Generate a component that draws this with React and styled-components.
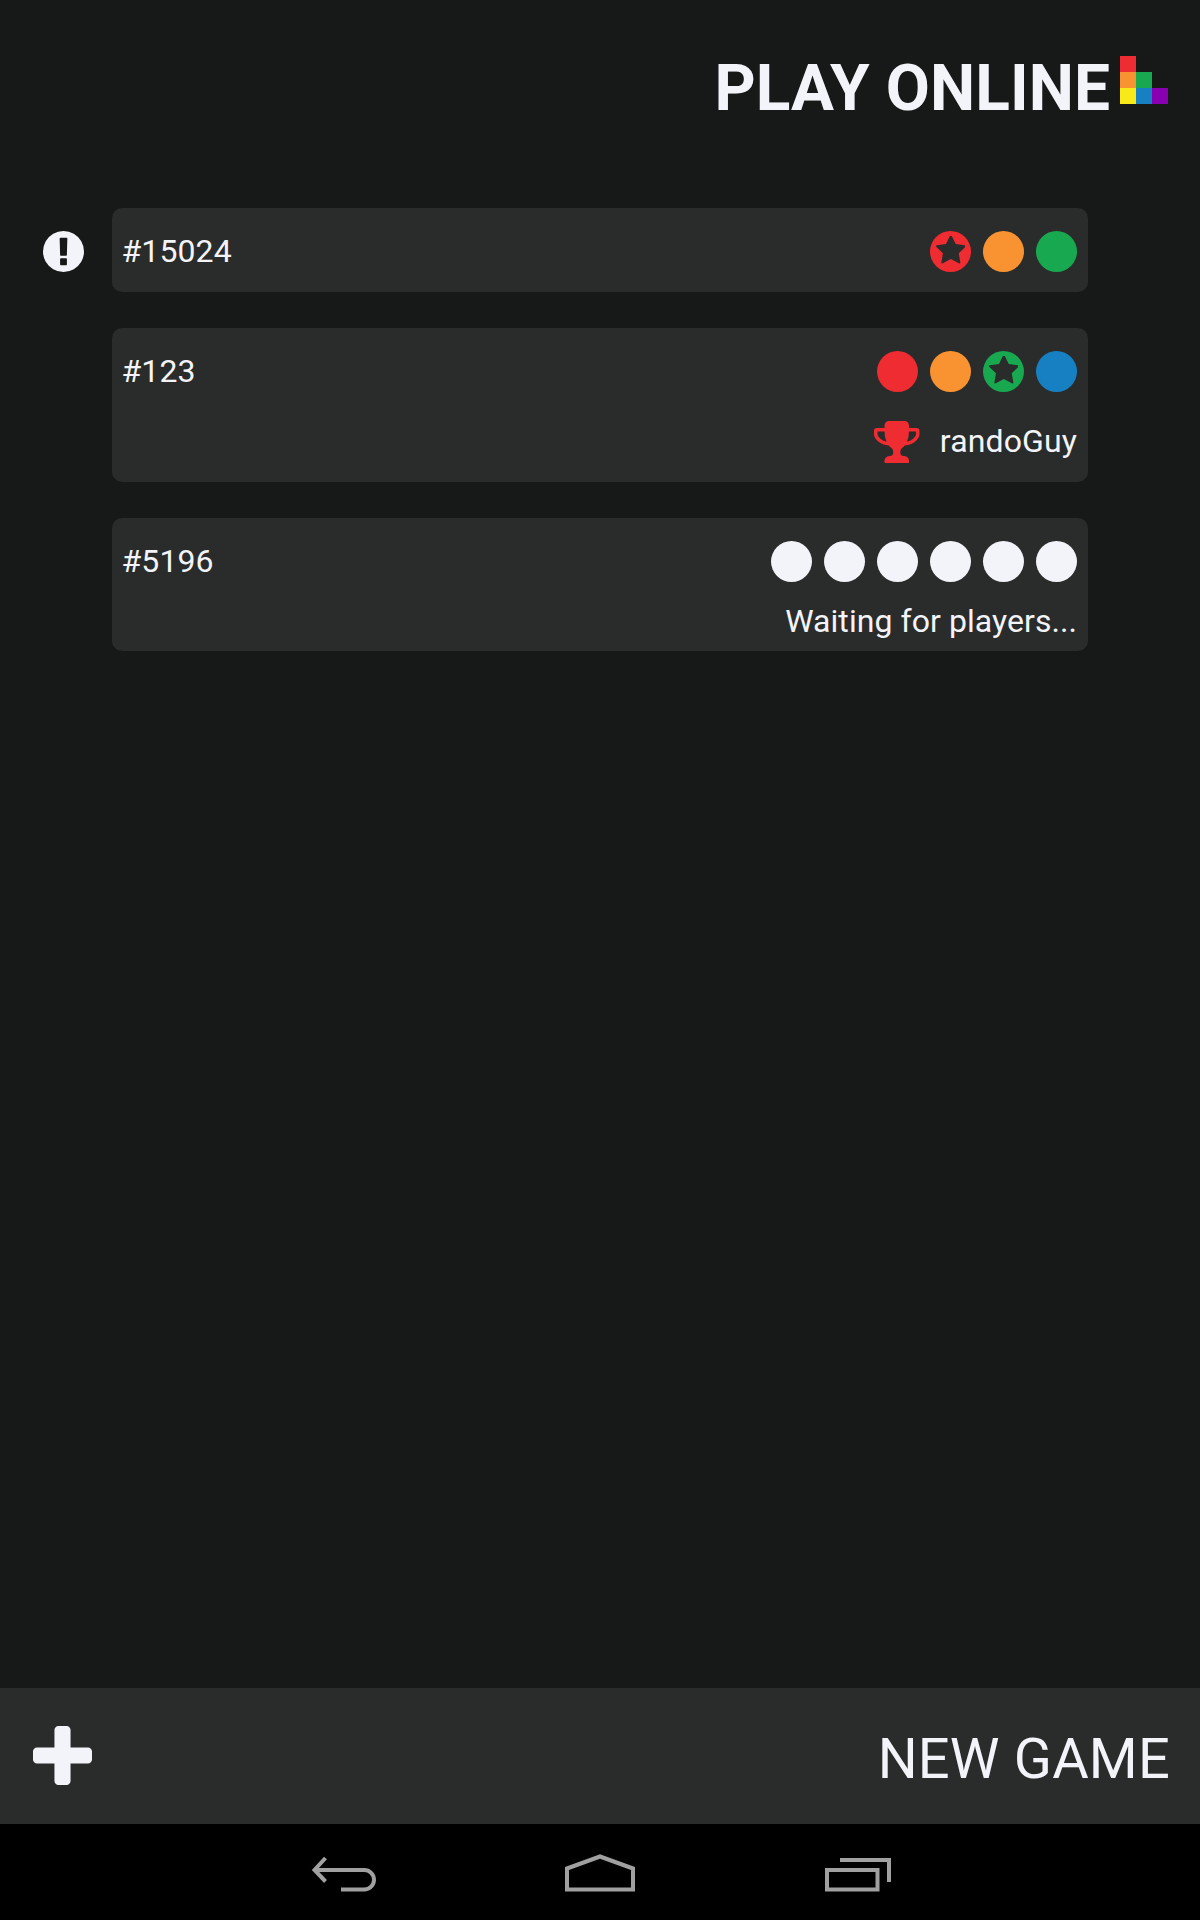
import React from "react";
import styled, { createGlobalStyle } from "styled-components";

const color = {
  bg: "#171918",
  panel: "#2a2b2b",
  text: "#f3f4f9",
  red: "#ee2c31",
  orange: "#f99331",
  yellow: "#f9e918",
  green: "#18a850",
  blue: "#1780c2",
  purple: "#8800b1",
  nav: "#a0a0a0",
};

const GlobalStyle = createGlobalStyle`
  * { box-sizing: border-box; }
  body {
    margin: 0;
    background: ${color.bg};
    color: ${color.text};
    font-family: Roboto, "Liberation Sans", sans-serif;
  }
`;

const Screen = styled.div`
  width: 1200px;
  height: 1920px;
  display: flex;
  flex-direction: column;
  background: ${color.bg};
  overflow: hidden;
`;

const Header = styled.header`
  height: 208px;
  padding: 48px 32px 0 0;
  display: flex;
  justify-content: flex-end;
  align-items: flex-start;
`;

const Title = styled.h1`
  margin: 3px 10px 0 0;
  font-size: 64px;
  line-height: 75px;
  font-weight: 700;
  letter-spacing: 0.08px;
  white-space: nowrap;
`;

const Logo = styled.div`
  margin-top: 8px;
  display: grid;
  grid-template-columns: repeat(3, 16px);
  grid-auto-rows: 16px;
`;

const Block = styled.span`
  background: ${(p) => p.$fill};
`;

const GameList = styled.main`
  flex: 1;
  display: flex;
  flex-direction: column;
  gap: 36px;
`;

const GameRow = styled.div`
  display: grid;
  grid-template-columns: 112px 976px;
`;

const Alert = styled.div`
  padding: 23px 0 0 43px;
`;

const Card = styled.section`
  grid-column: 2;
  height: ${(p) => p.$height}px;
  padding: 23px 11px 0 9.5px;
  border-radius: 10px;
  background: ${color.panel};
`;

const CardTop = styled.div`
  height: 41px;
  display: flex;
  justify-content: space-between;
  align-items: flex-start;
`;

const GameId = styled.span`
  font-size: 32px;
  line-height: 40px;
  letter-spacing: 0.1px;
`;

const Players = styled.div`
  display: flex;
  gap: 12px;
`;

const Dot = styled.span`
  width: 41px;
  height: 41px;
  border-radius: 50%;
  background: ${(p) => p.$fill};
  display: flex;
  justify-content: center;
  padding-top: 5px;
`;

const Status = styled.div`
  margin-top: ${(p) => p.$gap}px;
  display: flex;
  justify-content: flex-end;
  align-items: flex-start;
  gap: 20px;
  font-size: 32px;
  line-height: 38px;
  letter-spacing: 0.06px;
  white-space: nowrap;
`;

const Winner = styled.span`
  padding-top: 1px;
  letter-spacing: 0.12px;
`;

const Icon = styled.svg`
  display: block;
  flex: none;
  fill: ${(p) => p.$fill || color.text};
`;

const Footer = styled.footer`
  height: 136px;
  padding: 0 30px 0 33px;
  display: flex;
  justify-content: space-between;
  align-items: center;
  background: ${color.panel};
`;

const FooterIcon = styled.span`
  padding-bottom: 1px;
`;

const NewGame = styled.span`
  padding-top: 6px;
  font-size: 56px;
  line-height: 66px;
  letter-spacing: 0.2px;
`;

const NavBar = styled.nav`
  height: 96px;
  display: grid;
  grid-template-columns: repeat(3, 256px);
  justify-content: center;
  background: #000;
`;

const NavButton = styled.div`
  display: flex;
  justify-content: center;
  padding-top: 26px;
`;

const NavIcon = styled.svg`
  fill: none;
  stroke: ${color.nav};
  stroke-width: 4;
`;

const StarIcon = () => (
  <Icon $fill={color.panel} width="29.7" height="28" viewBox="64 110 1664 1510">
    <path d="M1728 647q0 22-26 48l-363 354 86 500q1 7 1 20 0 21-10.500 35.500t-30.500 14.500q-19 0-40-12l-449-236-449 236q-22 12-40 12-21 0-31.500-14.500t-10.500-35.500q0-6 2-20l86-500-364-354q-25-27-25-48 0-37 56-46l502-73 225-455q19-41 49-41t49 41l225 455 502 73q56 9 56 46z" />
  </Icon>
);

const TrophyIcon = () => (
  <Icon $fill={color.red} width="45.5" height="42" viewBox="64 128 1664 1536" preserveAspectRatio="none">
    <path d="M522 883q-74-162-74-371h-256v96q0 78 94.500 162t235.500 113zm1078-275v-96h-256q0 209-74 371 141-29 235.500-113t94.500-162zm128-128v128q0 71-41.500 143t-112 130-173 97.500-215.500 44.500q-42 54-95 95-38 34-52.500 72.500t-14.500 89.500q0 54 30.500 91t97.500 37q75 0 133.500 45.500t58.500 114.500v64q0 14-9 23t-23 9h-832q-14 0-23-9t-9-23v-64q0-69 58.500-114.500t133.500-45.500q67 0 97.500-37t30.500-91q0-51-14.500-89.500t-52.500-72.500q-53-41-95-95-113-5-215.500-44.500t-173-97.500-112-130-41.500-143v-128q0-40 28-68t68-28h288v-96q0-66 47-113t113-47h576q66 0 113 47t47 113v96h288q40 0 68 28t28 68z" />
  </Icon>
);

const AlertIcon = () => (
  <Icon width="41" height="41" viewBox="128 128 1536 1536">
    <path d="M896 128q209 0 385.500 103t279.500 279.500 103 385.500-103 385.500-279.500 279.500-385.500 103-385.500-103-279.500-279.500-103-385.500 103-385.500 279.500-279.500 385.500-103zm128 1247v-190q0-14-9-23.500t-22-9.500h-192q-13 0-23 10t-10 23v190q0 13 10 23t23 10h192q13 0 22-9.500t9-23.500zm-2-344l18-621q0-12-10-18-10-8-24-8h-220q-14 0-24 8-10 6-10 18l17 621q0 10 10 17.500t24 7.500h185q14 0 23.500-7.500t10.500-17.500z" />
  </Icon>
);

const PlusIcon = () => (
  <Icon width="59" height="59" viewBox="192 128 1408 1408">
    <path d="M1600 736v192q0 40-28 68t-68 28h-416v416q0 40-28 68t-68 28h-192q-40 0-68-28t-28-68v-416h-416q-40 0-68-28t-28-68v-192q0-40 28-68t68-28h416v-416q0-40 28-68t68-28h192q40 0 68 28t28 68v416h416q40 0 68 28t28 68z" />
  </Icon>
);

const games = [
  { id: "#15024", height: 84, alert: true, players: ["red", "orange", "green"], turn: 0 },
  { id: "#123", height: 154, players: ["red", "orange", "green", "blue"], turn: 2, winner: "randoGuy" },
  { id: "#5196", height: 133, players: ["text", "text", "text", "text", "text", "text"], note: "Waiting for players..." },
];

const logoRows = [
  ["red", null, null],
  ["orange", "green", null],
  ["yellow", "blue", "purple"],
];

export default function App() {
  return (
    <Screen>
      <GlobalStyle />
      <Header>
        <Title>PLAY ONLINE</Title>
        <Logo>
          {logoRows.flat().map((c, i) => (
            <Block key={i} $fill={c ? color[c] : "transparent"} />
          ))}
        </Logo>
      </Header>
      <GameList>
        {games.map((g) => (
          <GameRow key={g.id}>
            {g.alert && (
              <Alert>
                <AlertIcon />
              </Alert>
            )}
            <Card $height={g.height}>
              <CardTop>
                <GameId>{g.id}</GameId>
                <Players>
                  {g.players.map((p, i) => (
                    <Dot key={i} $fill={color[p]}>
                      {g.turn === i && <StarIcon />}
                    </Dot>
                  ))}
                </Players>
              </CardTop>
              {g.winner && (
                <Status $gap={29}>
                  <TrophyIcon />
                  <Winner>{g.winner}</Winner>
                </Status>
              )}
              {g.note && <Status $gap={20}>{g.note}</Status>}
            </Card>
          </GameRow>
        ))}
      </GameList>
      <Footer>
        <FooterIcon>
          <PlusIcon />
        </FooterIcon>
        <NewGame>NEW GAME</NewGame>
      </Footer>
      <NavBar>
        <NavButton>
          <NavIcon width="72" height="44" viewBox="308 1850 72 44">
            <path d="M341 1889.500H364.250A9.750 9.750 0 0 0 364.250 1870H315" />
            <path d="M325.500 1858L314.500 1870L325.500 1881.500" />
          </NavIcon>
        </NavButton>
        <NavButton>
          <NavIcon width="72" height="44" viewBox="564 1850 72 44">
            <path d="M567 1889.500V1868.500L600 1856.500L633 1868.500V1889.500Z" />
          </NavIcon>
        </NavButton>
        <NavButton>
          <NavIcon width="72" height="44" viewBox="820 1850 72 44">
            <path d="M827 1870H877.500V1889.500H827ZM840 1860H889V1882" />
          </NavIcon>
        </NavButton>
      </NavBar>
    </Screen>
  );
}
